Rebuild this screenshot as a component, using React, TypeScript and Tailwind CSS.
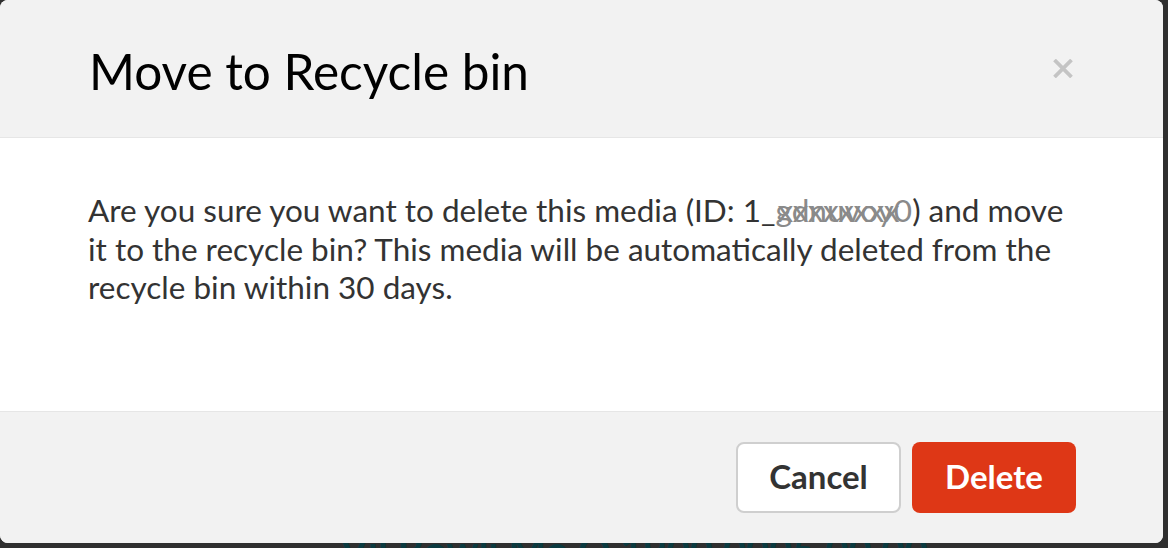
import React from 'react';

const font = { fontFamily: 'Lato, "Open Sans", sans-serif' };

const CloseIcon = () => (
  <svg width="20" height="19" viewBox="0 0 20 19" aria-hidden="true">
    <path d="M1.5 1 L18.5 18 M18.5 1 L1.5 18" stroke="#c4c4c4" strokeWidth="3.8" />
  </svg>
);

export default function App() {
  return (
    <div className="w-[1168px] h-[548px] bg-[#2f2f2f] overflow-hidden relative" style={font}>
      {/* page behind the modal */}
      <div className="absolute left-[340px] top-[530px] text-[40px] font-bold text-[#0b3a40] whitespace-nowrap leading-none">
        Vil Bowli Mo O 1900 0005 00 00
      </div>

      <div className="relative w-[1163px] h-[543px] rounded-[8px] bg-white flex flex-col overflow-hidden">
        {/* Header */}
        <div className="h-[138px] shrink-0 bg-[#f2f2f2] border-b border-[#e6e6e6] flex items-start justify-between pl-[89px] pr-[90px]">
          <h1 className="pt-[47px] text-[49.5px] leading-none text-black font-normal">Move to Recycle bin</h1>
          <button className="mt-[59px] flex items-center justify-center">
            <CloseIcon />
          </button>
        </div>

        {/* Body */}
        <div className="flex-1 pl-[88px] pt-[53px]">
          <p className="text-[31.5px] leading-[38.5px] text-[#333333] w-[987px]">
            Are you sure you want to delete this media (ID: 1_
            <span className="relative">
              <span className="text-[#8a8a8a]">gdnuvoy0</span>
              <span className="absolute left-[2px] top-0 text-[#8a8a8a] tracking-[-0.5px]">xxxxxxxx</span>
            </span>
            ) and move it to the recycle bin? This media will be automatically deleted from the recycle bin within 30 days.
          </p>
        </div>

        {/* Footer */}
        <div className="h-[132px] shrink-0 bg-[#f2f2f2] border-t border-[#e6e6e6] flex items-center justify-end gap-[11px] pr-[87px] pb-[1px]">
          <button className="w-[165px] h-[71px] rounded-[8px] bg-white border-2 border-[#cfcfcf] text-[33px] font-bold text-[#333333]">
            Cancel
          </button>
          <button className="w-[164px] h-[71px] rounded-[8px] bg-[#de3716] text-[33px] font-bold text-white">
            Delete
          </button>
        </div>
      </div>
    </div>
  );
}
